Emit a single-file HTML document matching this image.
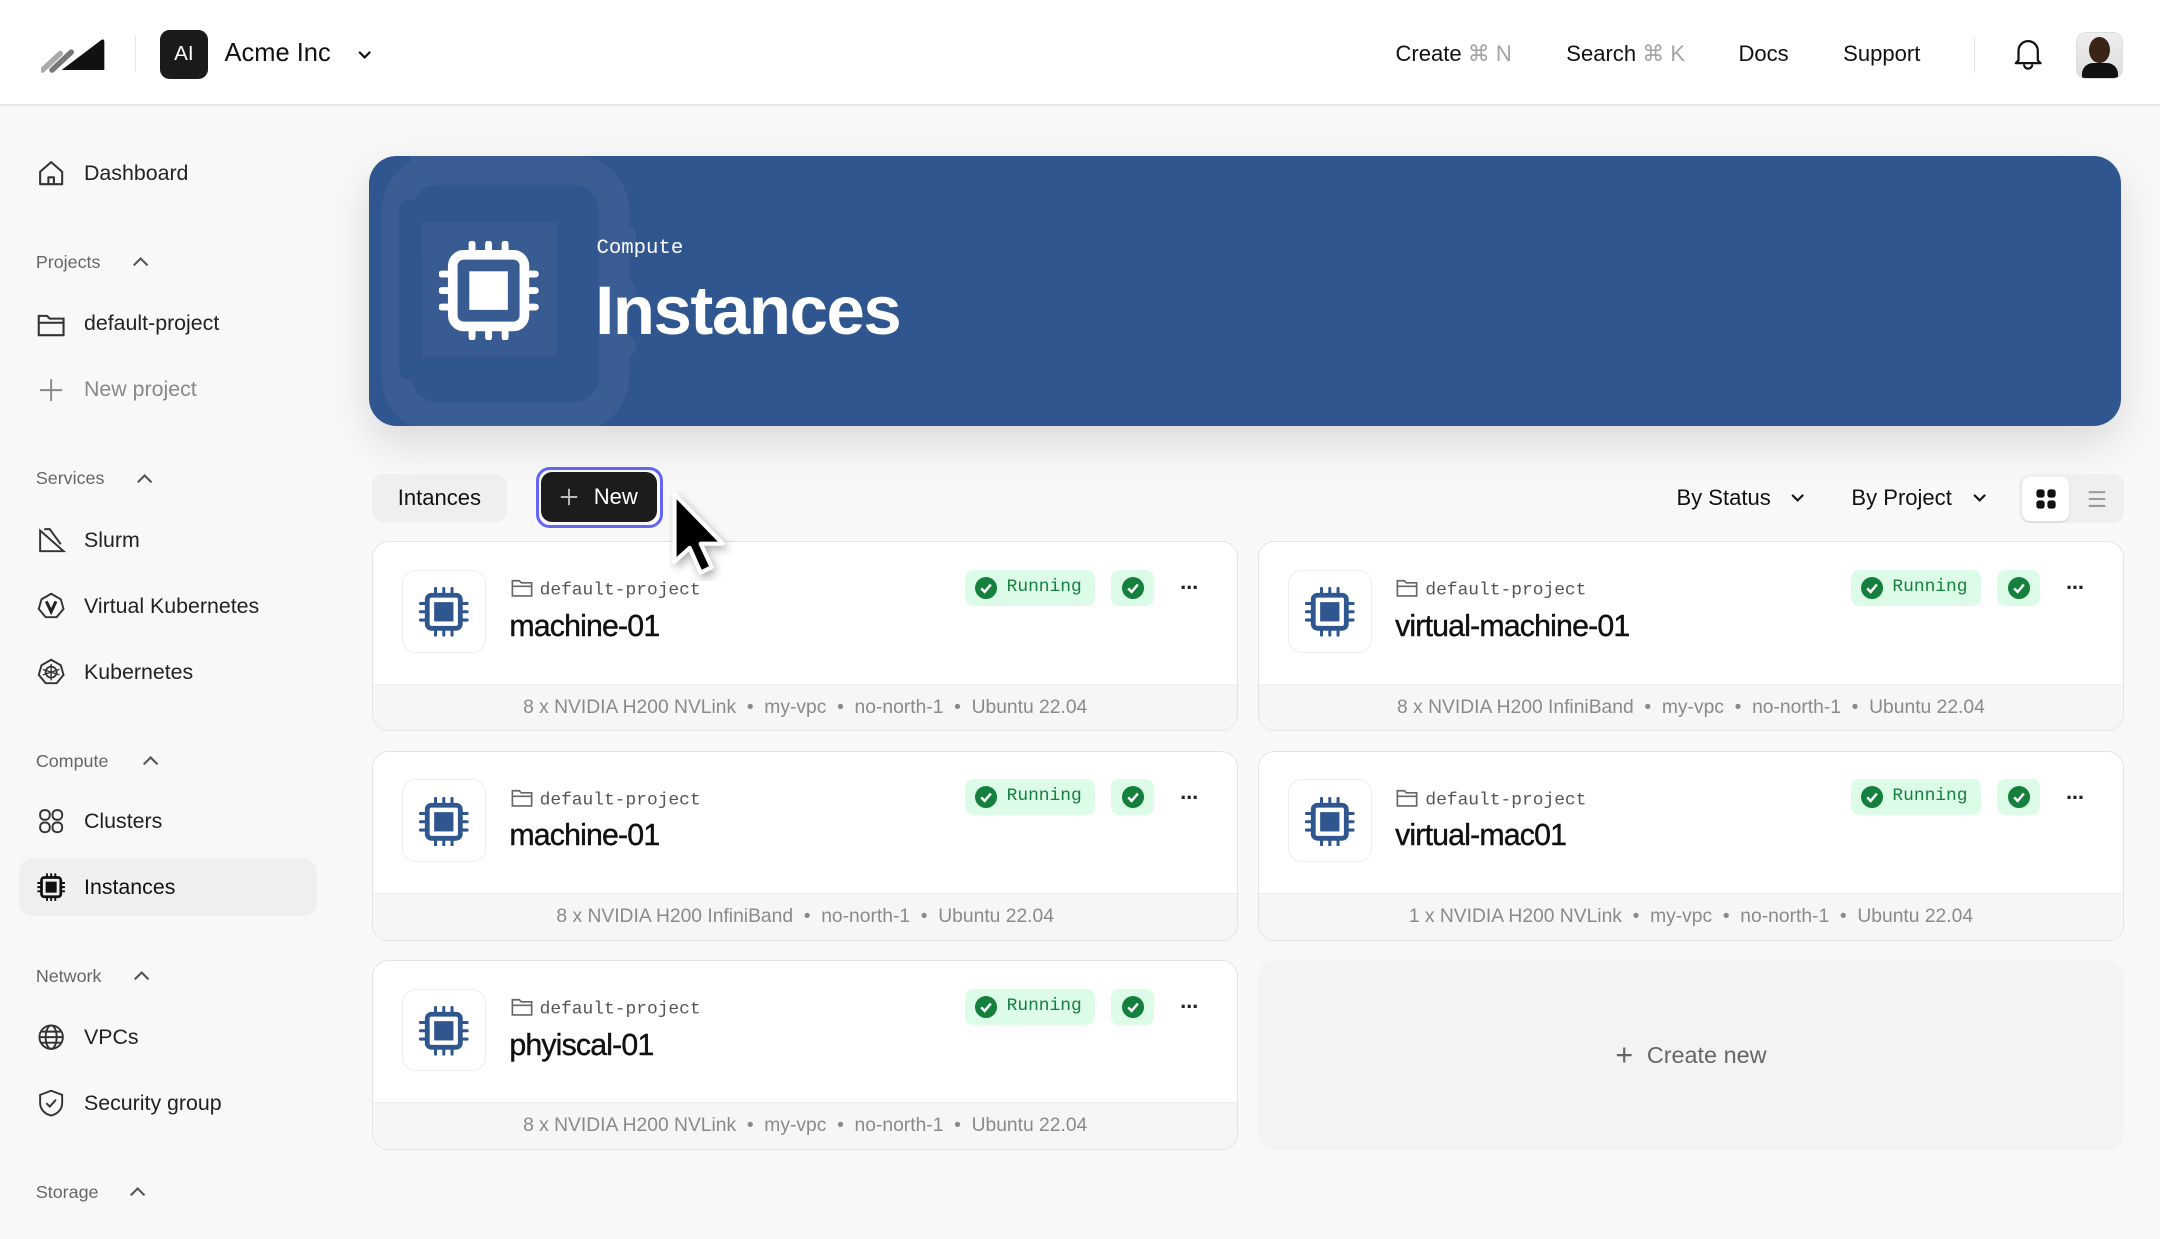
<!DOCTYPE html>
<html><head><meta charset="utf-8">
<style>
html{zoom:1.37755}
*{box-sizing:border-box;margin:0;padding:0}
body{width:1568px;height:899px;overflow:hidden;background:#f8f8f8;font-family:"Liberation Sans",sans-serif;color:#111;position:relative}
.a{position:absolute}
.hdr{left:0;top:0;width:1568px;height:77px;background:#fff;border-bottom:1.5px solid #e6e6e6}
.nav{font-size:16px;color:#111;top:30px}
.k{color:#a3a3a3}
.sb{font-size:15.5px;color:#222;left:61px}
.sec{font-size:13px;color:#666;left:26px}
.ic{left:26px;width:22px;height:22px}
.mono{font-family:"Liberation Mono",monospace}
.card{background:#fff;border:1px solid #e3e3e3;border-radius:12px;overflow:hidden;width:629px;height:138px}
.card .foot{position:absolute;left:0;right:0;bottom:0;height:34px;background:#f6f6f6;border-top:1px solid #eee;text-align:center;font-size:14px;color:#8a8a8a;line-height:34px}
.card .ib{position:absolute;left:21px;top:20px;width:61px;height:60px;border:1px solid #eee;border-radius:10px;background:#fff}
.card .ib svg{position:absolute;left:12px;top:12px}
.card .pj{position:absolute;left:100px;top:26px;font-size:13px;color:#555;font-family:"Liberation Mono",monospace}
.card .pj svg{vertical-align:-2px;margin-right:5px}
.card .nm{position:absolute;left:99px;top:49px;font-size:22px;color:#111;letter-spacing:-0.6px;-webkit-text-stroke:0.3px #111}
.run{position:absolute;left:430px;top:20px;width:94px;height:26px;background:#dcfce7;border-radius:6px;font-family:"Liberation Mono",monospace;font-size:13px;color:#15803d;line-height:26px;padding-left:30px}
.chk{position:absolute;left:536px;top:20px;width:31px;height:26px;background:#dcfce7;border-radius:6px}
.dots{position:absolute;left:586px;top:24px;font-size:16px;font-weight:bold;letter-spacing:-1px;color:#222}
</style></head><body>
<div class="a hdr"></div>
<svg class="a" style="left:30px;top:27px" width="48" height="26" viewBox="0 0 48 26"><path d="M1 24 L14 12" stroke="#aaa" stroke-width="4" stroke-linecap="round"/><path d="M8 24 L22 11" stroke="#777" stroke-width="4" stroke-linecap="round"/><path d="M15 24 L44 2 Q46 1 46 4 L46 24 Z" fill="#111"/></svg>
<div class="a" style="left:98px;top:26px;width:1px;height:26px;background:#e5e5e5"></div>
<div class="a" style="left:116px;top:22px;width:35px;height:35px;background:#1a1a1a;border-radius:7px;color:#fff;font-size:15px;text-align:center;line-height:35px">AI</div>
<div class="a" style="left:163px;top:28px;font-size:18.5px;color:#111">Acme Inc</div>
<svg class="a" style="left:258px;top:33px" width="14" height="14" viewBox="0 0 14 14"><path d="M3 5l4 4 4-4" stroke="#111" stroke-width="1.6" fill="none"/></svg>
<div class="a nav" style="left:1013px">Create <span class="k">⌘ N</span></div>
<div class="a nav" style="left:1137px">Search <span class="k">⌘ K</span></div>
<div class="a nav" style="left:1262px">Docs</div>
<div class="a nav" style="left:1338px">Support</div>
<div class="a" style="left:1433px;top:26px;width:1px;height:27px;background:#e5e5e5"></div>
<svg class="a" style="left:1461px;top:27px" width="22" height="24" viewBox="0 0 22 24"><path d="M4 17 V10 a7 7 0 0 1 14 0 V17 L20 19 H2 Z M8 20 a3 3 0 0 0 6 0" stroke="#111" stroke-width="1.6" fill="none" stroke-linejoin="round"/></svg>
<div class="a" style="left:1507px;top:23px;width:34px;height:34px;border-radius:7px;background:linear-gradient(#eee,#ddd);border:1px solid #ddd;overflow:hidden"><div class="a" style="left:9px;top:3px;width:15px;height:19px;border-radius:50%;background:#3a2418"></div><div class="a" style="left:4px;top:22px;width:26px;height:14px;border-radius:8px 8px 0 0;background:#111"></div></div>

<svg class="a ic" style="top:115px" viewBox="0 0 22 22"><path d="M3 10 L11 3 L19 10 V19 H3 Z M9 19 V14 H13 V19" stroke="#333" stroke-width="1.5" fill="none" stroke-linejoin="round"/></svg>
<div class="a sb" style="top:117px">Dashboard</div>
<div class="a sec" style="top:183px">Projects</div>
<svg class="a" style="left:95px;top:184px" width="14" height="14"><path d="M2 9l5-5 5 5" stroke="#555" stroke-width="1.5" fill="none"/></svg>
<svg class="a ic" style="top:224px" viewBox="0 0 22 22"><path d="M2 5 H8 L10 7 H20 V19 H2 Z M2 10 H20" stroke="#333" stroke-width="1.5" fill="none"/></svg>
<div class="a sb" style="top:226px">default-project</div>
<svg class="a ic" style="top:272px" viewBox="0 0 22 22"><path d="M11 3V19M3 11H19" stroke="#888" stroke-width="1.4"/></svg>
<div class="a sb" style="top:274px;color:#888">New project</div>
<div class="a sec" style="top:340px">Services</div>
<svg class="a" style="left:98px;top:341px" width="14" height="14"><path d="M2 9l5-5 5 5" stroke="#555" stroke-width="1.5" fill="none"/></svg>
<svg class="a ic" style="top:381px" viewBox="0 0 22 22"><path d="M3 4 V19 H20 Z M6 3 L10 3 L18 14" stroke="#333" stroke-width="1.4" fill="none"/></svg>
<div class="a sb" style="top:383px">Slurm</div>
<svg class="a ic" style="top:429px" viewBox="0 0 22 22"><path d="M11 2 L18 6 L20 13 L15 19 H7 L2 13 L4 6 Z" stroke="#333" stroke-width="1.4" fill="none"/><path d="M7.5 7.5 L11 15 L14.5 7.5" stroke="#222" stroke-width="2.2" fill="none"/></svg>
<div class="a sb" style="top:431px">Virtual Kubernetes</div>
<svg class="a ic" style="top:477px" viewBox="0 0 22 22"><path d="M11 2 L18 6 L20 13 L15 19 H7 L2 13 L4 6 Z" stroke="#333" stroke-width="1.4" fill="none"/><circle cx="11" cy="11" r="4" stroke="#333" stroke-width="1.3" fill="none"/><path d="M11 5V17M5 9L17 13M17 9L5 13" stroke="#333" stroke-width="1"/></svg>
<div class="a sb" style="top:479px">Kubernetes</div>
<div class="a sec" style="top:545px">Compute</div>
<svg class="a" style="left:102px;top:546px" width="14" height="14"><path d="M2 9l5-5 5 5" stroke="#555" stroke-width="1.5" fill="none"/></svg>
<svg class="a ic" style="top:585px" viewBox="0 0 22 22"><g stroke="#333" stroke-width="1.4" fill="none"><rect x="3" y="3" width="7" height="7" rx="3"/><rect x="12" y="3" width="7" height="7" rx="3"/><rect x="3" y="12" width="7" height="7" rx="3"/><rect x="12" y="12" width="7" height="7" rx="3"/></g></svg>
<div class="a sb" style="top:587px">Clusters</div>
<div class="a" style="left:14px;top:623px;width:216px;height:42px;background:#efefef;border-radius:10px"></div>
<svg class="a ic" style="top:633px" viewBox="0 0 22 22"><rect x="4" y="4" width="14" height="14" rx="2" stroke="#111" stroke-width="2" fill="none"/><rect x="7" y="7" width="8" height="8" fill="#111"/><path d="M8 1V4M11 1V4M14 1V4M8 18V21M11 18V21M14 18V21M1 8H4M1 11H4M1 14H4M18 8H21M18 11H21M18 14H21" stroke="#111" stroke-width="1.4"/></svg>
<div class="a sb" style="top:635px;color:#111">Instances</div>
<div class="a sec" style="top:701px">Network</div>
<svg class="a" style="left:96px;top:702px" width="14" height="14"><path d="M2 9l5-5 5 5" stroke="#555" stroke-width="1.5" fill="none"/></svg>
<svg class="a ic" style="top:742px" viewBox="0 0 22 22"><g stroke="#333" stroke-width="1.4" fill="none"><circle cx="11" cy="11" r="8.5"/><ellipse cx="11" cy="11" rx="4" ry="8.5"/><path d="M2.5 11H19.5M4 7H18M4 15H18"/></g></svg>
<div class="a sb" style="top:744px">VPCs</div>
<svg class="a ic" style="top:790px" viewBox="0 0 22 22"><path d="M11 2 L19 5 V11 C19 16 15 19 11 20 C7 19 3 16 3 11 V5 Z" stroke="#333" stroke-width="1.4" fill="none"/><path d="M7.5 11 L10 13.5 L14.5 8.5" stroke="#333" stroke-width="1.4" fill="none"/></svg>
<div class="a sb" style="top:792px">Security group</div>
<div class="a sec" style="top:858px">Storage</div>
<svg class="a" style="left:93px;top:859px" width="14" height="14"><path d="M2 9l5-5 5 5" stroke="#555" stroke-width="1.5" fill="none"/></svg>

<div class="a" style="left:268px;top:113px;width:1272px;height:196px;background:#2f568f;border-radius:20px;overflow:hidden;box-shadow:0 12px 30px rgba(0,0,0,.12)">
 <svg class="a" style="left:0;top:0" width="220" height="196" viewBox="0 0 220 196"><g fill="#3c5f95" opacity=".85"><rect x="20" y="10" width="158" height="180" rx="30" fill="none" stroke="#3c5f95" stroke-width="22"/><rect x="22" y="32" width="130" height="130" rx="6" fill="#2f568f"/><rect x="38" y="48" width="98" height="98" fill="#3a5d93"/><rect x="30" y="0" width="12" height="10"/><rect x="62" y="0" width="12" height="10"/><rect x="94" y="0" width="12" height="10"/><rect x="178" y="50" width="16" height="16" rx="8"/><rect x="178" y="90" width="16" height="16" rx="8"/><rect x="178" y="130" width="16" height="16" rx="8"/></g></svg>
 <svg class="a" style="left:51px;top:62px" width="72" height="72" viewBox="0 0 72 72"><rect x="10" y="10" width="52" height="52" rx="8" fill="none" stroke="#fff" stroke-width="7"/><rect x="22" y="22" width="28" height="28" fill="#fff"/><g stroke="#fff" stroke-width="5" stroke-linecap="round"><path d="M24 2V8M36 2V8M48 2V8M24 64V70M36 64V70M48 64V70M2 24H8M2 36H8M2 48H8M64 24H70M64 36H70M64 48H70"/></g></svg>
 <div class="a mono" style="left:165px;top:59px;font-size:15px;color:#fff">Compute</div>
 <div class="a" style="left:164px;top:84px;font-size:50px;font-weight:bold;color:#fff;letter-spacing:-1px">Instances</div>
</div>

<div class="a" style="left:270px;top:344px;width:98px;height:35px;background:#efefef;border-radius:8px;font-size:16px;text-align:center;line-height:35px;color:#111">Intances</div>
<div class="a" style="left:389px;top:339px;width:92px;height:44px;border:2.5px solid #6366f1;border-radius:10px"></div>
<div class="a" style="left:393px;top:343px;width:84px;height:36px;background:#1c1c1c;border-radius:8px;color:#fff;font-size:16px;line-height:36px;padding-left:38px">New</div>
<svg class="a" style="left:405px;top:353px" width="16" height="16"><path d="M8 2V14M2 8H14" stroke="#bbb" stroke-width="1.4"/></svg>
<div class="a" style="left:1217px;top:352px;font-size:16px">By Status</div>
<svg class="a" style="left:1298px;top:354px" width="14" height="14"><path d="M3 5l4 4 4-4" stroke="#111" stroke-width="1.5" fill="none"/></svg>
<div class="a" style="left:1344px;top:352px;font-size:16px">By Project</div>
<svg class="a" style="left:1430px;top:354px" width="14" height="14"><path d="M3 5l4 4 4-4" stroke="#111" stroke-width="1.5" fill="none"/></svg>
<div class="a" style="left:1466px;top:344px;width:76px;height:36px;background:#efefef;border-radius:8px"></div>
<div class="a" style="left:1468px;top:346px;width:34px;height:32px;background:#fff;border-radius:6px;box-shadow:0 1px 2px rgba(0,0,0,.1)"></div>
<svg class="a" style="left:1477px;top:354px" width="16" height="16"><g fill="#111"><rect x="1" y="1" width="6" height="6" rx="2"/><rect x="9" y="1" width="6" height="6" rx="2"/><rect x="1" y="9" width="6" height="6" rx="2"/><rect x="9" y="9" width="6" height="6" rx="2"/></g></svg>
<svg class="a" style="left:1514px;top:354px" width="16" height="16"><path d="M2 3H14M2 8H14M2 13H14" stroke="#999" stroke-width="1.5"/></svg>

<svg width="0" height="0" style="position:absolute"><defs>
<symbol id="chip" viewBox="0 0 36 36"><rect x="6" y="6" width="24" height="24" rx="3" fill="none" stroke="#2f568f" stroke-width="3.5"/><rect x="11" y="11" width="14" height="14" fill="#2f568f"/><g stroke="#2f568f" stroke-width="2.2" stroke-linecap="round"><path d="M12 1V5M18 1V5M24 1V5M12 31V35M18 31V35M24 31V35M1 12H5M1 18H5M1 24H5M31 12H35M31 18H35M31 24H35"/></g></symbol>
<symbol id="fold" viewBox="0 0 16 14"><path d="M1 2 H6 L7.5 3.5 H15 V13 H1 Z M1 6 H15" stroke="#666" stroke-width="1.2" fill="none"/></symbol>
<symbol id="ck" viewBox="0 0 16 16"><circle cx="8" cy="8" r="8" fill="#15803d"/><path d="M4.5 8.3 L7 10.8 L11.5 5.5" stroke="#fff" stroke-width="1.8" fill="none"/></symbol>
</defs></svg>

<div class="a card" style="left:270px;top:393px"><div class="ib"><svg width="36" height="36"><use href="#chip"/></svg></div><div class="pj"><svg width="16" height="14"><use href="#fold"/></svg>default-project</div><div class="nm">machine-01</div><div class="run"><svg style="position:absolute;left:7px;top:5px" width="16" height="16"><use href="#ck"/></svg>Running</div><div class="chk"><svg style="position:absolute;left:8px;top:5px" width="16" height="16"><use href="#ck"/></svg></div><div class="dots">···</div><div class="foot">8 x NVIDIA H200 NVLink &nbsp;•&nbsp; my-vpc &nbsp;•&nbsp; no-north-1 &nbsp;•&nbsp; Ubuntu 22.04</div></div>

<div class="a card" style="left:913px;top:393px"><div class="ib"><svg width="36" height="36"><use href="#chip"/></svg></div><div class="pj"><svg width="16" height="14"><use href="#fold"/></svg>default-project</div><div class="nm">virtual-machine-01</div><div class="run"><svg style="position:absolute;left:7px;top:5px" width="16" height="16"><use href="#ck"/></svg>Running</div><div class="chk"><svg style="position:absolute;left:8px;top:5px" width="16" height="16"><use href="#ck"/></svg></div><div class="dots">···</div><div class="foot">8 x NVIDIA H200 InfiniBand &nbsp;•&nbsp; my-vpc &nbsp;•&nbsp; no-north-1 &nbsp;•&nbsp; Ubuntu 22.04</div></div>

<div class="a card" style="left:270px;top:545px"><div class="ib"><svg width="36" height="36"><use href="#chip"/></svg></div><div class="pj"><svg width="16" height="14"><use href="#fold"/></svg>default-project</div><div class="nm">machine-01</div><div class="run"><svg style="position:absolute;left:7px;top:5px" width="16" height="16"><use href="#ck"/></svg>Running</div><div class="chk"><svg style="position:absolute;left:8px;top:5px" width="16" height="16"><use href="#ck"/></svg></div><div class="dots">···</div><div class="foot">8 x NVIDIA H200 InfiniBand &nbsp;•&nbsp; no-north-1 &nbsp;•&nbsp; Ubuntu 22.04</div></div>

<div class="a card" style="left:913px;top:545px"><div class="ib"><svg width="36" height="36"><use href="#chip"/></svg></div><div class="pj"><svg width="16" height="14"><use href="#fold"/></svg>default-project</div><div class="nm">virtual-mac01</div><div class="run"><svg style="position:absolute;left:7px;top:5px" width="16" height="16"><use href="#ck"/></svg>Running</div><div class="chk"><svg style="position:absolute;left:8px;top:5px" width="16" height="16"><use href="#ck"/></svg></div><div class="dots">···</div><div class="foot">1 x NVIDIA H200 NVLink &nbsp;•&nbsp; my-vpc &nbsp;•&nbsp; no-north-1 &nbsp;•&nbsp; Ubuntu 22.04</div></div>

<div class="a card" style="left:270px;top:697px"><div class="ib"><svg width="36" height="36"><use href="#chip"/></svg></div><div class="pj"><svg width="16" height="14"><use href="#fold"/></svg>default-project</div><div class="nm">phyiscal-01</div><div class="run"><svg style="position:absolute;left:7px;top:5px" width="16" height="16"><use href="#ck"/></svg>Running</div><div class="chk"><svg style="position:absolute;left:8px;top:5px" width="16" height="16"><use href="#ck"/></svg></div><div class="dots">···</div><div class="foot">8 x NVIDIA H200 NVLink &nbsp;•&nbsp; my-vpc &nbsp;•&nbsp; no-north-1 &nbsp;•&nbsp; Ubuntu 22.04</div></div>

<div class="a" style="left:913px;top:697px;width:629px;height:138px;background:#f3f3f3;border-radius:12px;text-align:center;line-height:138px;font-size:17px;color:#666"><span style="font-size:22px;vertical-align:-1px;margin-right:10px">+</span>Create new</div>

<svg class="a" style="left:486px;top:356px;z-index:10" width="50" height="66" viewBox="0 0 50 66"><path d="M4 3 L4 52 L15 42 L23 60 L31 56 L23 39 L39 39 Z" fill="#000" stroke="#fff" stroke-width="3" stroke-linejoin="round" style="filter:drop-shadow(2px 3px 3px rgba(0,0,0,.3))"/></svg>
</body></html>
